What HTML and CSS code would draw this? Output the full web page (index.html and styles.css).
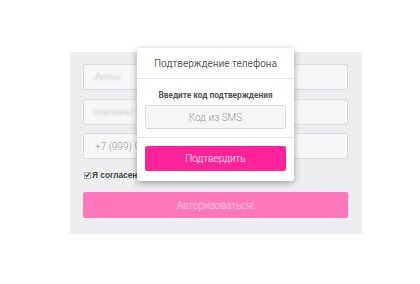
FILE: index.html
```html
<!DOCTYPE html>
<html lang="ru">
<head>
    <meta charset="UTF-8">
    <meta name="viewport" content="width=device-width, initial-scale=1.0">
    <title>Авторизация</title>
    <link rel="stylesheet" href="styles.css">
</head>
<body>
    <div class="page">
        <form class="login-form">
            <div class="field"><span class="blurred">Антон</span></div>
            <div class="field"><span class="blurred">mamoro11@mail.ru</span></div>
            <div class="field"><span class="phone">+7 (999) 999-99-99</span></div>
            <label class="agree">
                <span class="check"><svg width="6" height="6" viewBox="0 0 6 6"><path d="M0.6 3 L2.2 4.6 L5.4 0.8" fill="none" stroke="#333" stroke-width="1.3"/></svg></span>
                Я согласен
            </label>
            <button type="button" class="btn-login">Авторизоваться!</button>
        </form>

        <div class="modal">
            <div class="modal-header">Подтверждение телефона</div>
            <div class="modal-body">
                <div class="modal-label">Введите код подтверждения</div>
                <input type="text" class="code-input" placeholder="Код из SMS">
            </div>
            <div class="modal-footer">
                <button type="button" class="btn-confirm">Подтвердить</button>
            </div>
        </div>
    </div>
</body>
</html>
```

FILE: styles.css
```css
body { margin: 0; background: #fff; font-family: Roboto, "Noto Sans", sans-serif; }
.page { position: relative; width: 420px; height: 284px; padding-top: 52px; box-sizing: border-box; }

.login-form { margin-left: 70px; width: 292px; box-sizing: border-box; padding: 12px 14px 16px 13px; background: #eeeef0; border-radius: 2px; }
.field { height: 26px; box-sizing: border-box; border: 1px solid #dcdcdc; background: #f7f7f8; border-radius: 2px; margin-bottom: 8.5px; display: flex; align-items: center; padding-left: 11px; font-size: 10px; }
.blurred { color: #c4c4c4; filter: blur(0.8px); font-size: 9px; }
.phone { color: #9a9a9a; font-weight: 300; }
.agree { display: flex; align-items: center; gap: 1px; margin-top: 11px; padding-left: 1px; font-family: "Liberation Sans", Arial, sans-serif; font-weight: bold; font-size: 8.3px; color: #444; }
.check { width: 5px; height: 5px; border: 1px solid #aaa; background: #f4f4f4; display: flex; align-items: center; justify-content: center; }
.btn-login { display: block; width: 100%; height: 26px; margin-top: 12px; border: none; border-radius: 2px; background: #ff77bb; color: #fde; font-family: Roboto, sans-serif; font-size: 10px; font-weight: 300; }

.modal { position: absolute; left: 137px; top: 48px; width: 157px; background: #fff; border-radius: 3px; box-shadow: 0 2px 7px rgba(0, 0, 0, 0.35); }
.modal-header { height: 30px; display: flex; align-items: center; justify-content: center; border-bottom: 1px solid #e6e6e6; color: #5f5f5f; font-size: 10px; }
.modal-body { padding: 11px 8px 8px; border-bottom: 1px solid #e6e6e6; }
.modal-label { text-align: center; font-size: 8.3px; font-weight: bold; color: #555; margin-bottom: 5px; }
.code-input { display: block; width: 100%; height: 24px; box-sizing: border-box; border: 1px solid #dadada; border-radius: 2px; background: #f6f6f7; text-align: center; font-family: Roboto, sans-serif; font-size: 10px; font-weight: 300; }
.code-input::placeholder { color: #999; }
.modal-footer { padding: 8px 8px 10px; }
.btn-confirm { display: block; width: 100%; height: 25px; border: none; border-radius: 2px; background: #ff2299; color: #fff; font-family: Roboto, sans-serif; font-size: 10px; font-weight: 300; }
```
